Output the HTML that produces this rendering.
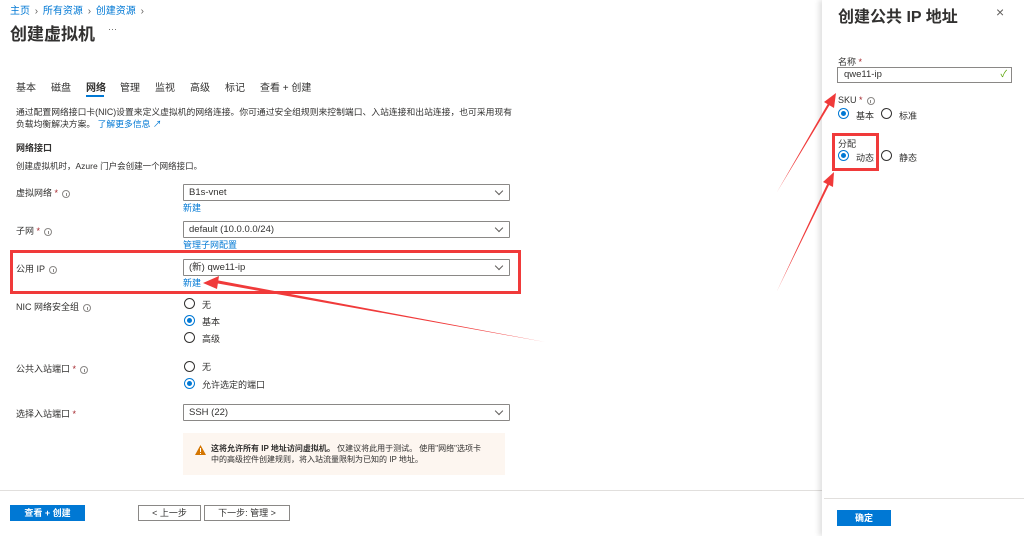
<!DOCTYPE html>
<html><head><meta charset="utf-8"><style>
*{margin:0;padding:0;box-sizing:border-box}
body{width:1024px;height:536px;overflow:hidden;background:#fff;font-family:"Liberation Sans","Noto Sans CJK SC",sans-serif;font-size:9px;color:#323130;position:relative}
.a{position:absolute;white-space:nowrap}
.link{color:#0078d4}
.sel{position:absolute;border:1px solid #8a8886;border-radius:1px;height:17px;padding-left:5px;line-height:15px;font-size:9.5px;color:#323130}
.sel:after{content:"";position:absolute;right:7px;top:3px;width:5px;height:5px;border-right:1px solid #605e5c;border-bottom:1px solid #605e5c;transform:rotate(45deg)}
.r{position:absolute;width:11px;height:11px;border:1px solid #323130;border-radius:50%}
.r.on{border-color:#0078d4}
.r.on:after{content:"";position:absolute;left:2px;top:2px;width:5px;height:5px;border-radius:50%;background:#0078d4}
.i{display:inline-block;width:8px;height:8px;border:1px solid #8a8886;border-radius:50%;vertical-align:middle;margin-left:4px;position:relative}
.i:after{content:"";position:absolute;left:2.5px;top:2px;width:1px;height:3px;background:#8a8886}
.st{color:#a4262c}
.btn{position:absolute;height:16px;border:1px solid #8a8886;text-align:center;line-height:14px;font-size:9px}
</style></head><body>
<div class="a link" style="left:10px;top:2px;font-size:10px;word-spacing:2px">主页 <span style="color:#605e5c">›</span> 所有资源 <span style="color:#605e5c">›</span> 创建资源 <span style="color:#605e5c">›</span></div>
<div class="a" style="left:10px;top:20px;font-size:17px;font-weight:600">创建虚拟机</div>
<div class="a" style="left:108px;top:24px;color:#605e5c">···</div>
<div class="a" style="left:16px;top:79px;font-size:10px">基本</div>
<div class="a" style="left:51px;top:79px;font-size:10px">磁盘</div>
<div class="a" style="left:86px;top:79px;font-size:10px;font-weight:600">网络</div>
<div class="a" style="left:86px;top:95px;width:18px;height:2px;background:#0078d4"></div>
<div class="a" style="left:120px;top:79px;font-size:10px">管理</div>
<div class="a" style="left:155px;top:79px;font-size:10px">监视</div>
<div class="a" style="left:190px;top:79px;font-size:10px">高级</div>
<div class="a" style="left:225px;top:79px;font-size:10px">标记</div>
<div class="a" style="left:260px;top:79px;font-size:10px">查看 + 创建</div>
<div class="a" style="left:16px;top:105px;font-size:8.8px">通过配置网络接口卡(NIC)设置来定义虚拟机的网络连接。你可通过安全组规则来控制端口、入站连接和出站连接，也可采用现有</div>
<div class="a" style="left:16px;top:117px;font-size:8.8px">负载均衡解决方案。 <span class="link">了解更多信息 ↗</span></div>
<div class="a" style="left:16px;top:141px;font-size:9px;font-weight:700">网络接口</div>
<div class="a" style="left:16px;top:160px;font-size:8.5px">创建虚拟机时，Azure 门户会创建一个网络接口。</div>

<div class="a" style="left:16px;top:186px">虚拟网络 <span class="st">*</span><span class="i"></span></div>
<div class="sel" style="left:183px;top:184px;width:327px">B1s-vnet</div>
<div class="a link" style="left:183px;top:201px">新建</div>
<div class="a" style="left:16px;top:224px">子网 <span class="st">*</span><span class="i"></span></div>
<div class="sel" style="left:183px;top:221px;width:327px">default (10.0.0.0/24)</div>
<div class="a link" style="left:183px;top:238px">管理子网配置</div>
<div class="a" style="left:16px;top:262px">公用 IP<span class="i"></span></div>
<div class="sel" style="left:183px;top:259px;width:327px">(新) qwe11-ip</div>
<div class="a link" style="left:183px;top:276px">新建</div>
<div class="a" style="left:10px;top:250px;width:511px;height:44px;border:3px solid #f03a3a"></div>

<div class="a" style="left:16px;top:300px">NIC 网络安全组<span class="i"></span></div>
<div class="r" style="left:184px;top:298px"></div><div class="a" style="left:202px;top:298px">无</div>
<div class="r on" style="left:184px;top:315px"></div><div class="a" style="left:202px;top:315px">基本</div>
<div class="r" style="left:184px;top:332px"></div><div class="a" style="left:202px;top:332px">高级</div>
<div class="a" style="left:16px;top:362px">公共入站端口 <span class="st">*</span><span class="i"></span></div>
<div class="r" style="left:184px;top:361px"></div><div class="a" style="left:202px;top:360px">无</div>
<div class="r on" style="left:184px;top:378px"></div><div class="a" style="left:202px;top:378px">允许选定的端口</div>
<div class="a" style="left:16px;top:407px">选择入站端口 <span class="st">*</span></div>
<div class="sel" style="left:183px;top:404px;width:327px">SSH (22)</div>
<div class="a" style="left:183px;top:433px;width:322px;height:42px;background:#fdf6f0"></div>
<svg class="a" style="left:195px;top:445px" width="11" height="10"><path d="M5.5 0L11 10H0Z" fill="#d47500"/><rect x="5" y="3" width="1" height="4" fill="#fff"/><rect x="5" y="8" width="1" height="1" fill="#fff"/></svg>
<div class="a" style="left:211px;top:443px;font-size:8px"><b>这将允许所有 IP 地址访问虚拟机。</b> 仅建议将此用于测试。 使用"网络"选项卡</div>
<div class="a" style="left:211px;top:454px;font-size:8px">中的高级控件创建规则，将入站流量限制为已知的 IP 地址。</div>

<div class="a" style="left:0;top:490px;width:824px;height:1px;background:#e1dfdd"></div>
<div class="btn" style="left:10px;top:505px;width:75px;background:#0078d4;border-color:#0078d4;color:#fff;font-weight:700">查看 + 创建</div>
<div class="btn" style="left:138px;top:505px;width:63px">&lt; 上一步</div>
<div class="btn" style="left:204px;top:505px;width:86px">下一步: 管理 &gt;</div>

<div class="a" style="left:822px;top:0;width:202px;height:536px;background:#fff;box-shadow:-3px 0 5px rgba(0,0,0,.12)"></div>
<div class="a" style="left:838px;top:3px;font-size:16px;font-weight:600">创建公共 IP 地址</div>
<div class="a" style="left:996px;top:4px;font-size:14px;color:#605e5c">×</div>
<div class="a" style="left:838px;top:55px">名称 <span class="st">*</span></div>
<div class="a" style="left:837px;top:67px;width:175px;height:16px;border:1px solid #8a8886;padding-left:6px;line-height:14px;font-size:9.5px">qwe11-ip<span style="position:absolute;right:4px;color:#57a300">✓</span></div>
<div class="a" style="left:838px;top:95px">SKU <span class="st">*</span><span class="i"></span></div>
<div class="r on" style="left:838px;top:108px"></div><div class="a" style="left:856px;top:109px">基本</div>
<div class="r" style="left:881px;top:108px"></div><div class="a" style="left:899px;top:109px">标准</div>
<div class="a" style="left:838px;top:137px">分配</div>
<div class="r on" style="left:838px;top:150px"></div><div class="a" style="left:856px;top:151px">动态</div>
<div class="r" style="left:881px;top:150px"></div><div class="a" style="left:899px;top:151px">静态</div>
<div class="a" style="left:832px;top:133px;width:47px;height:38px;border:3px solid #f03a3a"></div>
<div class="a" style="left:824px;top:498px;width:200px;height:1px;background:#e1dfdd"></div>
<div class="btn" style="left:837px;top:510px;width:54px;background:#0078d4;border-color:#0078d4;color:#fff;font-weight:700">确定</div>

<svg class="a" style="left:0;top:0" width="1024" height="536">
<g fill="#f03a3a">
<polygon points="545,342 215,283 216,280"/>
<polygon points="203,283 219,276 217,289"/>
<polygon points="777,192 830,100 832,101"/>
<polygon points="836,93 834,108 824,102"/>
<polygon points="777,291 829,180 831,181"/>
<polygon points="834,172 833,187 823,182"/>
</g></svg>
</body></html>
